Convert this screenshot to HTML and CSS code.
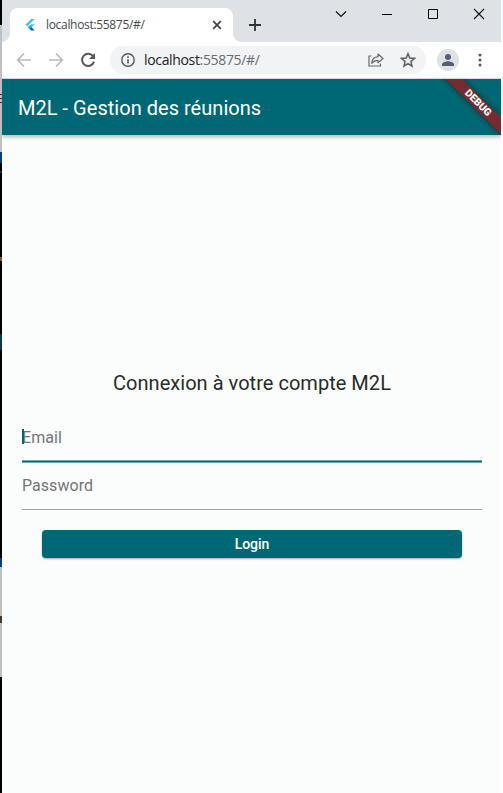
FILE: index.html
```html
<!DOCTYPE html>
<html lang="fr">
<head>
<meta charset="utf-8">
<title>M2L - Gestion des réunions</title>
<link rel="stylesheet" href="styles.css">
</head>
<body>
<div class="desktop-edge"></div>
<div class="window">
  <header class="tab-strip">
    <div class="tab">
      <svg class="favicon" width="12" height="14" viewBox="0 0 12 14"><path d="M7.2 1h3.6L3.2 8.5 1.4 6.8z" fill="#45c4fa"/><path d="M7.2 6.2h3.6L7.5 9.5l-1.8-1.8z" fill="#45c4fa"/><path d="M3.9 9.4l1.8-1.8 5.1 4.8H7.2z" fill="#075b9e"/><path d="M3.9 9.4l1.8-1.8 1.8 1.8-1.8 1.8z" fill="#29a9ee"/></svg>
      <span class="tab-title">localhost:55875/#/</span>
      <svg class="tab-close" width="10" height="10" viewBox="0 0 10 10"><path d="M1.2 1.2l7.6 7.6M8.8 1.2L1.2 8.8" stroke="#3c4043" stroke-width="1.7"/></svg>
    </div>
    <svg class="new-tab" width="12" height="12" viewBox="0 0 12 12"><path d="M6 0v12M0 6h12" stroke="#303236" stroke-width="1.8"/></svg>
    <div class="window-controls">
      <svg width="12" height="12" viewBox="0 0 12 12"><path d="M1 3.5l5 5 5-5" fill="none" stroke="#111" stroke-width="1.2"/></svg>
      <svg width="12" height="12" viewBox="0 0 12 12"><path d="M1 6.5h10" stroke="#000"/></svg>
      <svg width="12" height="12" viewBox="0 0 12 12"><path d="M1.5 1.5h9v9h-9z" fill="none" stroke="#000"/></svg>
      <svg width="12" height="12" viewBox="0 0 12 12"><path d="M1 1l10 10M11 1L1 11" stroke="#111" stroke-width="1.1"/></svg>
    </div>
  </header>
  <nav class="toolbar">
    <svg width="16" height="16" viewBox="0 0 16 16"><path d="M15 8H2M8 1.5L1.7 8 8 14.5" fill="none" stroke="#b9bbbe" stroke-width="1.7"/></svg>
    <svg width="16" height="16" viewBox="0 0 16 16"><path d="M1 8h13M8 1.5L14.3 8 8 14.5" fill="none" stroke="#b9bbbe" stroke-width="1.7"/></svg>
    <svg width="16" height="16" viewBox="0 0 16 16"><path d="M13.3 4.5A6.1 6.1 0 1 0 14 9.6" fill="none" stroke="#55585c" stroke-width="2"/><path d="M15 1v6H9z" fill="#55585c"/></svg>
    <div class="address">
      <svg class="info" width="14" height="14" viewBox="0 0 14 14"><circle cx="7" cy="7" r="6.2" fill="none" stroke="#55585c" stroke-width="1.4"/><path d="M7 6.200v4.300M7 3.300v1.600" stroke="#55585c" stroke-width="1.6"/></svg>
      <span class="url"><span class="host">localhost</span>:55875/#/</span>
      <svg class="share" width="16" height="14" viewBox="0 0 16 14"><path d="M3.500 3H1v10h11.500v-2.500" fill="none" stroke="#66696d" stroke-width="1.2"/><path d="M10 1l5 4.500-5 4.200V7.300C7 7.300 5.200 8.300 3.700 10.300 4 6.500 6.300 4 10 3.700z" fill="none" stroke="#66696d" stroke-width="1.2" stroke-linejoin="round"/></svg>
      <svg class="star" width="16" height="16" viewBox="0 0 14 14"><path d="M7 1.500l1.600 3.800 4.100.3-3.100 2.700.9 4L7 10.200l-3.500 2.100.9-4L1.300 5.600l4.100-.3z" fill="none" stroke="#5c5f63" stroke-width="1.350"/></svg>
    </div>
    <svg class="avatar" width="22" height="22" viewBox="0 0 22 22"><circle cx="11" cy="11" r="11" fill="#dee1e6"/><circle cx="11" cy="8" r="3" fill="#535e72"/><path d="M5 17v-1.500c0-2 4-3.200 6-3.200s6 1.200 6 3.200V17z" fill="#535e72"/></svg>
    <svg class="menu" width="4" height="14" viewBox="0 0 4 14"><g fill="#55585c"><circle cx="2" cy="2" r="1.5"/><circle cx="2" cy="7" r="1.5"/><circle cx="2" cy="12" r="1.5"/></g></svg>
  </nav>
  <main class="app">
    <div class="app-bar">
      <h1>M2L - Gestion des réunions</h1>
    </div>
    <div class="debug-corner"><span class="debug">DEBUG</span></div>
    <form class="login">
      <h2>Connexion à votre compte M2L</h2>
      <div class="field focused"><i class="caret"></i><span>Email</span></div>
      <div class="field"><span>Password</span></div>
      <button type="button">Login</button>
    </form>
  </main>
</div>
</body>
</html>
```
FILE: styles.css
```css
* { box-sizing: border-box; }
body { margin: 0; width: 503px; height: 793px; display: flex; overflow: hidden; background: #fff; }
svg { display: block; flex: none; }
.desktop-edge {
  width: 2px;
  background: linear-gradient(#000 25px, #bfc0c0 25px 94px, #333 94px 95px, #bfc0c0 95px 98px, #333 98px 99px, #bfc0c0 99px 102px, #333 102px 103px, #bfc0c0 103px 152px, #083c87 152px 163px, #000 163px 171px, #3c2923 171px 173px, #000 173px 257px, #745419 257px 261px, #000 261px 334px, #103446 334px 350px, #000 350px 558px, #083c87 558px 567px, #bfc0c0 567px 616px, #49372d 616px 623px, #bfc0c0 623px 677px, #000 677px);
}
.window { width: 499px; display: flex; flex-direction: column; }

.tab-strip { height: 42px; background: #dee1e6; display: flex; align-items: flex-start; }
.tab { position: relative; width: 223px; height: 34px; margin: 8px 0 0 8px; padding: 0 11px 0 14px; display: flex; align-items: center; background: #fff; border-radius: 8px 8px 0 0; }
.tab::before, .tab::after { content: ""; position: absolute; bottom: 0; width: 8px; height: 8px; }
.tab::before { left: -8px; background: radial-gradient(circle at 0 0, transparent 7.5px, #fff 8px); }
.tab::after { right: -8px; background: radial-gradient(circle at 100% 0, transparent 7.5px, #fff 8px); }
.tab-title { flex: 1; margin-left: 10px; font: 12px/18px "Open Sans", "Noto Sans", sans-serif; letter-spacing: -0.32px; color: #45484c; }
.new-tab { margin: 19px 0 0 16px; }
.window-controls { display: flex; gap: 34px; margin: 8px 0 0 74px; }

.toolbar { height: 37px; display: flex; align-items: center; padding-left: 14px; gap: 16px; border-bottom: 1px solid #d5d7d9; }
.address { width: 316px; height: 28px; margin-left: -2px; padding: 0 10px 0 11px; display: flex; align-items: center; background: #f1f3f4; border-radius: 14px; }
.url { flex: 1; margin-left: 9px; font: 14px/20px "Open Sans", "Noto Sans", sans-serif; letter-spacing: -0.34px; color: #686b70; }
.host { color: #202124; }
.star { margin-left: 16px; }
.avatar { margin-left: -5px; }
.menu { margin-left: 3px; }

.app { position: relative; flex: 1; display: flex; flex-direction: column; background: #fbfdfd; font-family: Roboto, sans-serif; }
.app-bar { height: 56px; padding-left: 16px; display: flex; align-items: center; background: #006874; color: #fff; box-shadow: 0 2px 4px rgba(0,0,0,.28); clip-path: inset(0 0 -10px 0); }
h1 { margin: 1px 0 0; font-size: 20px; font-weight: 400; line-height: 24px; letter-spacing: .03px; }
.debug-corner { position: absolute; top: 0; right: 0; width: 80px; height: 56px; overflow: hidden; }
.debug { position: absolute; left: -3px; top: 18px; width: 120px; height: 12px; background: #752b30; color: #fff; font-size: 10.2px; font-weight: 900; line-height: 12px; text-align: center; transform: rotate(45deg); box-shadow: 0 0 6px rgba(0,0,0,.5); }
.login { padding: 235px 19px 0 20px; display: flex; flex-direction: column; }
h2 { margin: 0 0 18px; font-size: 20px; font-weight: 400; line-height: 26px; text-align: center; letter-spacing: .03px; color: #292b2b; }
.field { position: relative; height: 48px; padding-top: 14px; font-size: 16px; line-height: 20px; letter-spacing: .05px; color: #747676; border-bottom: 1px solid #a2a4a4; }
.focused { border-bottom: 0; }
.focused::after { content: ""; position: absolute; left: 0; right: 0; bottom: -1px; height: 3px; background: linear-gradient(#70a9b0 1px, #006874 1px 2px, #70a9b0 2px); }
.caret { position: absolute; left: 0; top: 16px; width: 2px; height: 15px; margin-top: -1px; background: #006874; }
button { height: 28px; margin: 20px 20px 0; padding: 0; border: 0; border-radius: 4px; background: #006874; color: #fff; font: 500 14px/28px Roboto, sans-serif; letter-spacing: -.05px; box-shadow: 0 1px 2px rgba(0,0,0,.35); }
```
